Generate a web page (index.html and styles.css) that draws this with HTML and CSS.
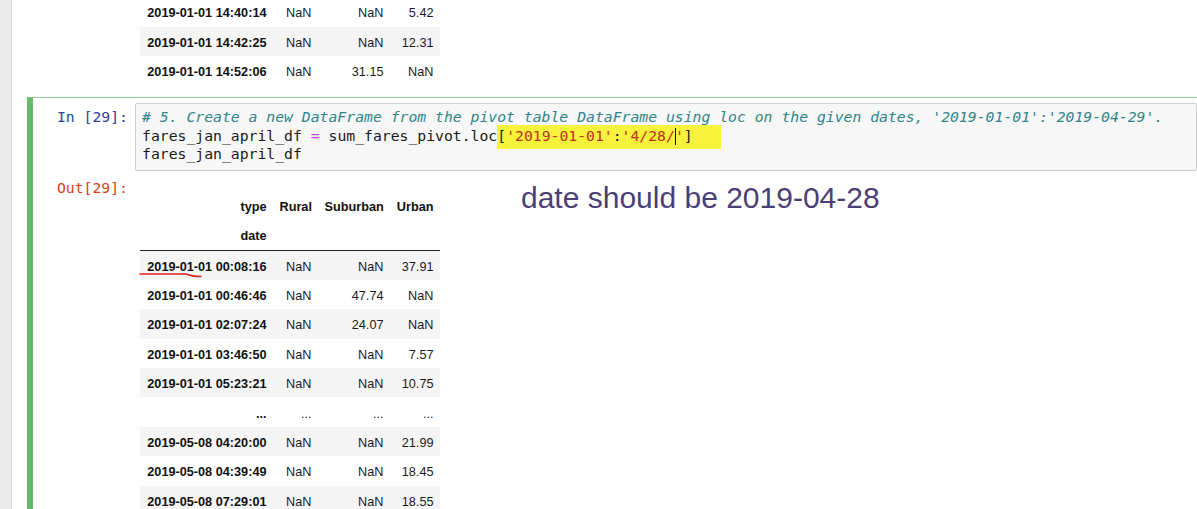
FILE: index.html
```html
<!DOCTYPE html>
<html lang="en">
<head>
<meta charset="utf-8">
<title>Notebook</title>
<link rel="stylesheet" href="styles.css">
</head>
<body>
<div class="page">
  <div class="gutter"></div>
  <div class="notebook">
    <div class="cell prev">
      <div class="row">
        <div class="prompt"></div>
        <div class="output-area">
          <table class="df tail">
            <colgroup><col class="c-idx"><col class="c-r"><col class="c-s"><col class="c-u"></colgroup>
            <tbody>
              <tr><th>2019-01-01 14:40:14</th><td>NaN</td><td>NaN</td><td>5.42</td></tr>
              <tr><th>2019-01-01 14:42:25</th><td>NaN</td><td>NaN</td><td>12.31</td></tr>
              <tr><th>2019-01-01 14:52:06</th><td>NaN</td><td>31.15</td><td>NaN</td></tr>
            </tbody>
          </table>
        </div>
      </div>
    </div>

    <div class="cell selected">
      <div class="row">
        <div class="prompt in">In&nbsp;[29]:</div>
        <div class="input-area"><pre class="code"><span class="c"># 5. Create a new DataFrame from the pivot table DataFrame using loc on the given dates, '2019-01-01':'2019-04-29'.</span>
fares_jan_april_df <span class="o">=</span> sum_fares_pivot.loc<span class="hl">[<span class="s">'2019-01-01'</span>:<span class="s">'4/28/<span class="cursor"></span>'</span>]</span>
fares_jan_april_df</pre></div>
      </div>
      <div class="row out-row">
        <div class="prompt out">Out[29]:</div>
        <div class="output-area">
          <table class="df">
            <colgroup><col class="c-idx"><col class="c-r"><col class="c-s"><col class="c-u"></colgroup>
            <thead>
              <tr><th>type</th><th>Rural</th><th>Suburban</th><th>Urban</th></tr>
              <tr><th>date</th><th></th><th></th><th></th></tr>
            </thead>
            <tbody>
              <tr><th>2019-01-01 00:08:16</th><td>NaN</td><td>NaN</td><td>37.91</td></tr>
              <tr><th>2019-01-01 00:46:46</th><td>NaN</td><td>47.74</td><td>NaN</td></tr>
              <tr><th>2019-01-01 02:07:24</th><td>NaN</td><td>24.07</td><td>NaN</td></tr>
              <tr><th>2019-01-01 03:46:50</th><td>NaN</td><td>NaN</td><td>7.57</td></tr>
              <tr><th>2019-01-01 05:23:21</th><td>NaN</td><td>NaN</td><td>10.75</td></tr>
              <tr><th>...</th><td>...</td><td>...</td><td>...</td></tr>
              <tr><th>2019-05-08 04:20:00</th><td>NaN</td><td>NaN</td><td>21.99</td></tr>
              <tr><th>2019-05-08 04:39:49</th><td>NaN</td><td>NaN</td><td>18.45</td></tr>
              <tr><th>2019-05-08 07:29:01</th><td>NaN</td><td>NaN</td><td>18.55</td></tr>
            </tbody>
          </table>
        </div>
      </div>
    </div>
  </div>

  <div class="note">date should be 2019-04-28</div>
  <svg class="underline" width="66" height="10" viewBox="0 0 66 10"><path d="M2 4 L48 4 Q54 6.5 63 6.5" fill="none" stroke="#e0201c" stroke-width="1.5" stroke-linecap="round"/></svg>
</div>
</body>
</html>
```

FILE: styles.css
```css
* { box-sizing: border-box; }
html, body { margin: 0; padding: 0; background: #fff; overflow: hidden; }
body { width: 1197px; height: 509px; }

.page { position: relative; display: flex; align-items: flex-start; height: 509px; overflow: hidden; }
.gutter { flex: 0 0 12px; align-self: stretch; background: #ebebeb; border-right: 1px solid #d9d9d9; }
.notebook { flex: 0 0 1191px; margin-left: 15px; }

.cell { width: 1176px; border: 1px solid transparent; border-left: 6px solid transparent; padding: 5px; }
.cell.prev { margin-top: -4px; padding-top: 0; padding-bottom: 0; }
.cell.selected { margin-top: 10.5px; border-color: #94cf97; border-left-color: #66bb6a; }

.row { display: flex; align-items: flex-start; }
.out-row { margin-top: 8px; }

.prompt { flex: 0 0 97px; padding-right: 7px; text-align: right; font-family: "DejaVu Sans Mono", monospace; font-size: 14.75px; line-height: 17px; white-space: nowrap; }
.prompt.in { color: #303f9f; padding-top: 5px; line-height: 18.5px; }
.prompt.out { color: #d84315; }

.input-area { flex: 1; background: #f7f7f7; border: 1px solid #cfcfcf; border-radius: 2px; padding: 4px 6px 6px 6px; }
.code { margin: 0; font-family: "DejaVu Sans Mono", monospace; font-size: 14.75px; line-height: 18.5px; color: #1a1a1a; white-space: pre; }
.code .c { color: #2f8589; font-style: italic; }
.code .o { color: #b94ad9; }
.code .s { color: #c0301f; }
.code .hl { background: #f7f23b; padding: 2px 28px 5px 0; }
.code .cursor { display: inline-block; width: 0; height: 17px; border-left: 1px solid #111; margin-right: -1px; vertical-align: -4px; }

.output-area { flex: 1; }

.df { table-layout: fixed; width: 300px; border-collapse: collapse; border-spacing: 0; margin-left: 5px; font-family: "Liberation Sans", Arial, sans-serif; font-size: 12.7px; color: #1b1b1b; }
.df .c-idx { width: 133px; }
.df .c-r { width: 45px; }
.df .c-s { width: 72px; }
.df .c-u { width: 50px; }
.df th, .df td { padding: 0 6.5px; text-align: right; vertical-align: middle; white-space: nowrap; }
.df tbody th, .df tbody td { padding-top: 3px; }
.df th { font-weight: bold; color: #111; }
.df td { font-weight: normal; }
.df thead { border-bottom: 1px solid #222; }
.df thead tr { height: 29px; }
.df tbody tr { height: 29.4px; }
.df tbody tr:nth-child(odd) { background: #f5f5f5; }
.df.tail tbody tr { height: 29.5px; background: transparent; }
.df.tail tbody tr:nth-child(even) { background: #f5f5f5; }

.cell.selected .df { margin-top: 14px; }

.note { position: absolute; left: 521px; top: 181px; font-family: "Liberation Sans", Arial, sans-serif; font-size: 30px; line-height: 34px; color: #4c3f77; white-space: nowrap; }
.underline { position: absolute; left: 138px; top: 270px; }
```
